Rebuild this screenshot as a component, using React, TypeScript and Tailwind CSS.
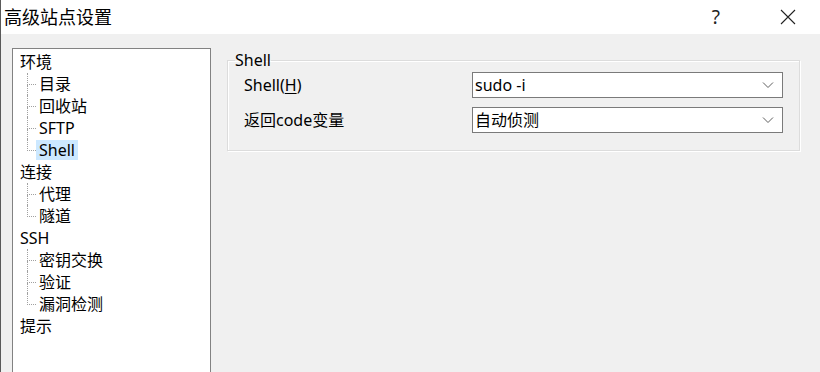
import React from 'react';

type TreeGroup = { label: string; children: string[] };

const tree: TreeGroup[] = [
  { label: '环境', children: ['目录', '回收站', 'SFTP', 'Shell'] },
  { label: '连接', children: ['代理', '隧道'] },
  { label: 'SSH', children: ['密钥交换', '验证', '漏洞检测'] },
  { label: '提示', children: [] },
];

const font = { fontFamily: '"Noto Sans", "Noto Sans CJK SC", sans-serif' };

function Chevron() {
  return (
    <svg width="12" height="8" viewBox="0 0 12 8" fill="none" stroke="#5f5f5f" strokeWidth="1">
      <path d="M1 1.5l5 5 5-5" />
    </svg>
  );
}

function Combo({ value }: { value: string }) {
  return (
    <div className="flex h-[26px] w-[311px] items-center justify-between border border-[#7a7a7a] bg-white pl-[2px] pr-[8px] text-[16px] text-black">
      <span className="leading-none">{value}</span>
      <Chevron />
    </div>
  );
}

export default function App() {
  return (
    <div className="h-[372px] w-[820px] overflow-hidden border-l border-[#5a5a5a] bg-[#f0f0f0] text-black" style={font}>
      {/* Title bar */}
      <div className="flex h-[34px] items-center justify-between bg-white pl-[3px]">
        <span className="text-[18px] leading-none">高级站点设置</span>
        <div className="flex items-center">
          <span className="mr-[60px] text-[19px] leading-none text-[#222]">?</span>
          <svg width="16" height="16" viewBox="0 0 16 16" className="mr-[24px]" stroke="#222" strokeWidth="1.1">
            <path d="M1 1l14 14M15 1L1 15" />
          </svg>
        </div>
      </div>

      <div className="flex">
        {/* Tree */}
        <div className="ml-[11px] mt-[14px] h-[340px] w-[199px] border border-[#828282] bg-white pl-[7px] pt-[2px] text-[16px]">
          {tree.map((g) => (
            <div key={g.label}>
              <div className="flex h-[22px] items-center leading-none">{g.label}</div>
              {g.children.map((c, i) => {
                const last = i === g.children.length - 1;
                const selected = c === 'Shell';
                return (
                  <div key={c} className="flex h-[22px] items-stretch">
                    <div className="ml-[7px] flex w-[9px] flex-col">
                      <div className="flex-1 border-b border-l border-dotted border-[#a0a0a0]" />
                      <div className={`flex-1 border-l border-dotted ${last ? 'border-transparent' : 'border-[#a0a0a0]'}`} />
                    </div>
                    <div className="flex items-center">
                      <span className={`flex h-[20px] items-center px-[3px] leading-none ${selected ? 'bg-[#cce8ff]' : ''}`}>{c}</span>
                    </div>
                  </div>
                );
              })}
            </div>
          ))}
        </div>

        {/* Right panel */}
        <fieldset className="ml-[16px] mt-[16px] h-[101px] w-[573px] border border-[#dcdcdc] px-0 shadow-[1px_1px_0_#ffffff,inset_1px_1px_0_#ffffff]">
          <legend className="ml-[7px] text-[16px] leading-[20px]">Shell</legend>
          <div className="mt-[2px] flex flex-col gap-[9px] px-[16px]">
            <div className="flex items-center justify-between">
              <span className="text-[16px] leading-none">
                Shell(<span className="underline underline-offset-2">H</span>)
              </span>
              <Combo value="sudo -i" />
            </div>
            <div className="flex items-center justify-between">
              <span className="text-[16px] leading-none">返回code变量</span>
              <Combo value="自动侦测" />
            </div>
          </div>
        </fieldset>
      </div>
    </div>
  );
}
